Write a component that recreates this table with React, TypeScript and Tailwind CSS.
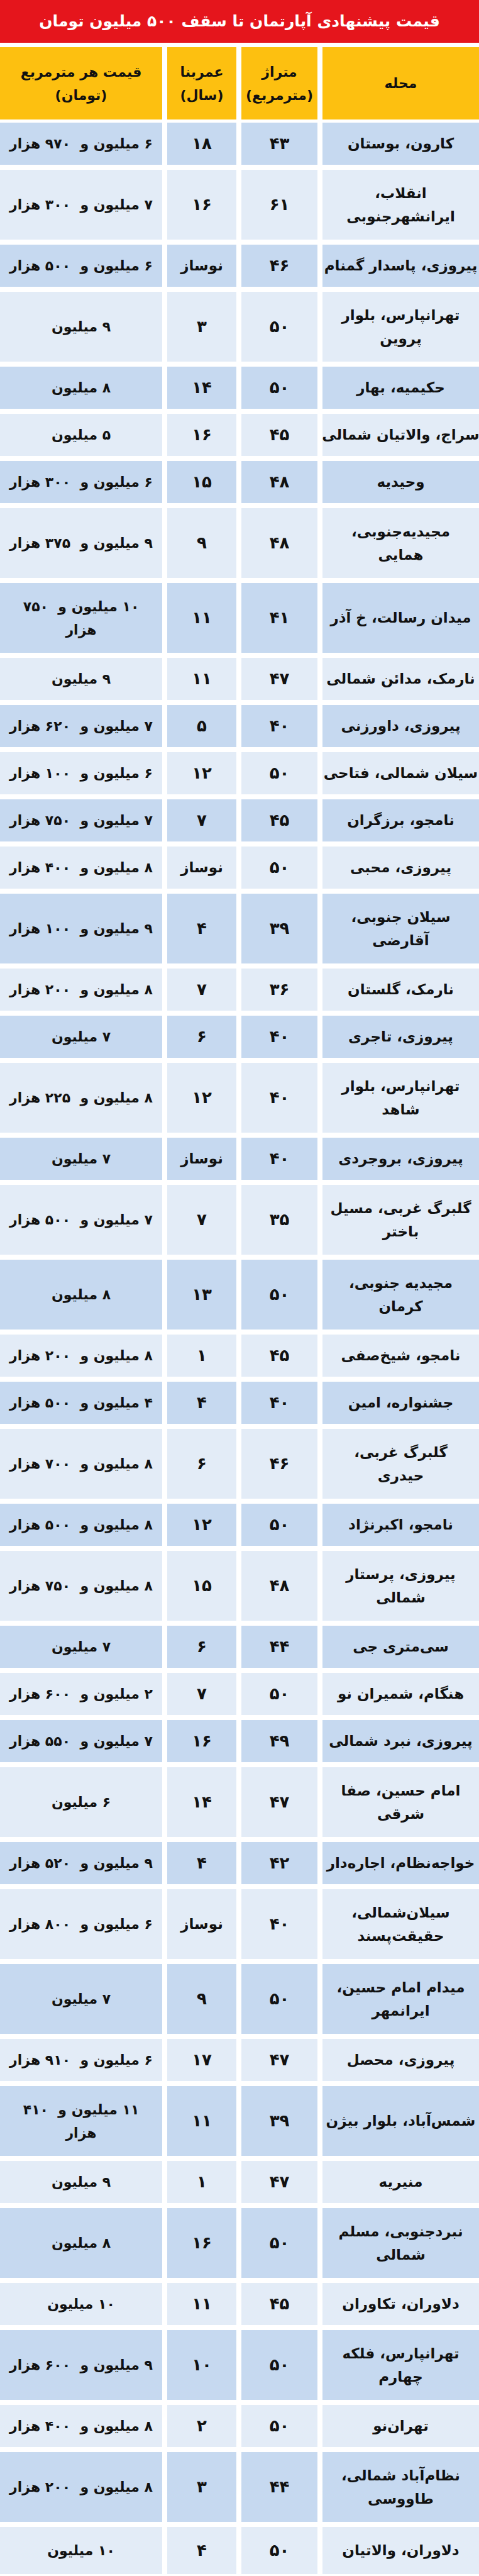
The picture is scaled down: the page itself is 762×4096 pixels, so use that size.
type Row = { n: string[]; a: string; y: string; p: string[] };

const rows: Row[] = [
  { n: ["کارون، بوستان"], a: "۴۳", y: "۱۸", p: ["۶ میلیون و  ۹۷۰ هزار"] },
  { n: ["انقلاب،", "ایرانشهرجنوبی"], a: "۶۱", y: "۱۶", p: ["۷ میلیون و  ۳۰۰ هزار"] },
  { n: ["پیروزی، پاسدار گمنام"], a: "۴۶", y: "نوساز", p: ["۶ میلیون و  ۵۰۰ هزار"] },
  { n: ["تهرانپارس، بلوار", "پروین"], a: "۵۰", y: "۳", p: ["۹ میلیون"] },
  { n: ["حکیمیه، بهار"], a: "۵۰", y: "۱۴", p: ["۸ میلیون"] },
  { n: ["سراج، والاتیان شمالی"], a: "۴۵", y: "۱۶", p: ["۵ میلیون"] },
  { n: ["وحیدیه"], a: "۴۸", y: "۱۵", p: ["۶ میلیون و  ۳۰۰ هزار"] },
  { n: ["مجیدیه‌جنوبی،", "همایی"], a: "۴۸", y: "۹", p: ["۹ میلیون و  ۳۷۵ هزار"] },
  { n: ["میدان رسالت، خ آذر"], a: "۴۱", y: "۱۱", p: ["۱۰ میلیون و  ۷۵۰", "هزار"] },
  { n: ["نارمک، مدائن شمالی"], a: "۴۷", y: "۱۱", p: ["۹ میلیون"] },
  { n: ["پیروزی، داورزنی"], a: "۴۰", y: "۵", p: ["۷ میلیون و  ۶۲۰ هزار"] },
  { n: ["سیلان شمالی، فتاحی"], a: "۵۰", y: "۱۲", p: ["۶ میلیون و  ۱۰۰ هزار"] },
  { n: ["نامجو، برزگران"], a: "۴۵", y: "۷", p: ["۷ میلیون و  ۷۵۰ هزار"] },
  { n: ["پیروزی، محبی"], a: "۵۰", y: "نوساز", p: ["۸ میلیون و  ۴۰۰ هزار"] },
  { n: ["سیلان جنوبی،", "آقارضی"], a: "۳۹", y: "۴", p: ["۹ میلیون و  ۱۰۰ هزار"] },
  { n: ["نارمک، گلستان"], a: "۳۶", y: "۷", p: ["۸ میلیون و  ۲۰۰ هزار"] },
  { n: ["پیروزی، تاجری"], a: "۴۰", y: "۶", p: ["۷ میلیون"] },
  { n: ["تهرانپارس، بلوار", "شاهد"], a: "۴۰", y: "۱۲", p: ["۸ میلیون و  ۲۲۵ هزار"] },
  { n: ["پیروزی، بروجردی"], a: "۴۰", y: "نوساز", p: ["۷ میلیون"] },
  { n: ["گلبرگ غربی، مسیل", "باختر"], a: "۳۵", y: "۷", p: ["۷ میلیون و  ۵۰۰ هزار"] },
  { n: ["مجیدیه جنوبی،", "کرمان"], a: "۵۰", y: "۱۳", p: ["۸ میلیون"] },
  { n: ["نامجو، شیخ‌صفی"], a: "۴۵", y: "۱", p: ["۸ میلیون و  ۲۰۰ هزار"] },
  { n: ["جشنواره، امین"], a: "۴۰", y: "۴", p: ["۴ میلیون و  ۵۰۰ هزار"] },
  { n: ["گلبرگ غربی،", "حیدری"], a: "۴۶", y: "۶", p: ["۸ میلیون و  ۷۰۰ هزار"] },
  { n: ["نامجو، اکبرنژاد"], a: "۵۰", y: "۱۲", p: ["۸ میلیون و  ۵۰۰ هزار"] },
  { n: ["پیروزی، پرستار", "شمالی"], a: "۴۸", y: "۱۵", p: ["۸ میلیون و  ۷۵۰ هزار"] },
  { n: ["سی‌متری جی"], a: "۴۴", y: "۶", p: ["۷ میلیون"] },
  { n: ["هنگام، شمیران نو"], a: "۵۰", y: "۷", p: ["۲ میلیون و  ۶۰۰ هزار"] },
  { n: ["پیروزی، نبرد شمالی"], a: "۴۹", y: "۱۶", p: ["۷ میلیون و  ۵۵۰ هزار"] },
  { n: ["امام حسین، صفا", "شرقی"], a: "۴۷", y: "۱۴", p: ["۶ میلیون"] },
  { n: ["خواجه‌نظام، اجاره‌دار"], a: "۴۲", y: "۴", p: ["۹ میلیون و  ۵۲۰ هزار"] },
  { n: ["سیلان‌شمالی،", "حقیقت‌پسند"], a: "۴۰", y: "نوساز", p: ["۶ میلیون و  ۸۰۰ هزار"] },
  { n: ["میدام امام حسین،", "ایرانمهر"], a: "۵۰", y: "۹", p: ["۷ میلیون"] },
  { n: ["پیروزی، محصل"], a: "۴۷", y: "۱۷", p: ["۶ میلیون و  ۹۱۰ هزار"] },
  { n: ["شمس‌آباد، بلوار بیژن"], a: "۳۹", y: "۱۱", p: ["۱۱ میلیون و  ۴۱۰", "هزار"] },
  { n: ["منیریه"], a: "۴۷", y: "۱", p: ["۹ میلیون"] },
  { n: ["نبردجنوبی، مسلم", "شمالی"], a: "۵۰", y: "۱۶", p: ["۸ میلیون"] },
  { n: ["دلاوران، تکاوران"], a: "۴۵", y: "۱۱", p: ["۱۰ میلیون"] },
  { n: ["تهرانپارس، فلکه", "چهارم"], a: "۵۰", y: "۱۰", p: ["۹ میلیون و  ۶۰۰ هزار"] },
  { n: ["تهران‌نو"], a: "۵۰", y: "۲", p: ["۸ میلیون و  ۴۰۰ هزار"] },
  { n: ["نظام‌آباد شمالی،", "طاووسی"], a: "۴۴", y: "۳", p: ["۸ میلیون و  ۲۰۰ هزار"] },
  { n: ["دلاوران، والاتیان"], a: "۵۰", y: "۴", p: ["۱۰ میلیون"] },
];

const font = { fontFamily: '"DejaVu Sans", sans-serif' };

function Cell({ lines, bg, size = "" }: { lines: string[]; bg: string; size?: string }) {
  return (
    <div className={`flex flex-col items-center justify-center overflow-hidden whitespace-pre ${bg} ${size}`}>
      {lines.map((l, i) => (
        <span key={i} className="leading-[37px]">
          {l}
        </span>
      ))}
    </div>
  );
}

export default function App() {
  return (
    <div dir="rtl" className="w-[762px] bg-white text-[#111] font-bold" style={font}>
      <div className="flex h-[68px] items-center justify-center bg-[#e5151c] text-[25px] text-white">
        قیمت پیشنهادی آپارتمان تا سقف ۵۰۰ میلیون تومان
      </div>

      <div className="mt-[7px] grid h-[115px] grid-cols-[249px_121px_110px_1fr] gap-x-[8px] text-[22px]">
        <Cell lines={["محله"]} bg="bg-[#fdc010]" />
        <Cell lines={["متراژ", "(مترمربع)"]} bg="bg-[#fdc010]" />
        <Cell lines={["عمربنا", "(سال)"]} bg="bg-[#fdc010]" />
        <Cell lines={["قیمت هر مترمربع", "(تومان)"]} bg="bg-[#fdc010]" />
      </div>

      <div className="mt-[5px] flex flex-col gap-y-[8px]">
        {rows.map((r, i) => {
          const tall = r.n.length > 1 || r.p.length > 1;
          const last = i === rows.length - 1;
          const bg = i % 2 === 0 ? "bg-[#c6d9f0]" : "bg-[#e3ecf7]";
          return (
            <div
              key={i}
              className={`grid grid-cols-[249px_121px_110px_1fr] gap-x-[8px] ${tall ? "h-[111px]" : last ? "h-[75px]" : "h-[67px]"}`}
            >
              <Cell lines={r.n} bg={bg} size="text-[23px]" />
              <Cell lines={[r.a]} bg={bg} size="text-[26px]" />
              <Cell lines={[r.y]} bg={bg} size={r.y === "نوساز" ? "text-[23px]" : "text-[26px]"} />
              <Cell lines={r.p} bg={bg} size="text-[22px]" />
            </div>
          );
        })}
      </div>
    </div>
  );
}
